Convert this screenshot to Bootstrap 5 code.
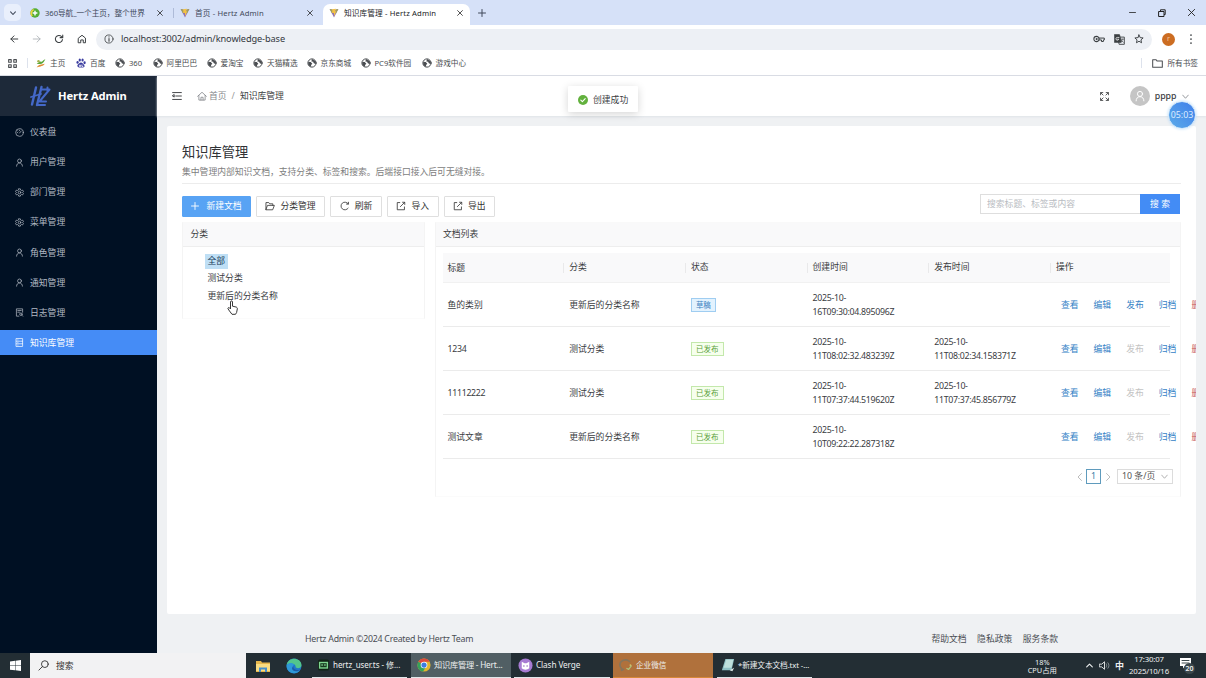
<!DOCTYPE html>
<html lang="zh-CN">
<head>
<meta charset="utf-8">
<title>知识库管理 - Hertz Admin</title>
<link rel="stylesheet" href="https://cdn.jsdelivr.net/npm/bootstrap@5.3.0/dist/css/bootstrap.min.css">
<style>
html,body{height:100%;overflow:hidden}
body{font-family:"Noto Sans","Noto Sans CJK SC",sans-serif;font-size:8.8px;line-height:14px;color:#3a3c3f;background:#fff}
svg{display:block;flex:none;fill:none;stroke:currentColor;stroke-width:1.3;stroke-linecap:round;stroke-linejoin:round}
svg[stroke="none"]{stroke:none}
.ic{width:10px;height:10px}
.txt{white-space:nowrap}
.desk{width:1206px;height:678px}
/* browser chrome */
.strip{height:25px;background:#d6e1f8;padding-left:4px;font-size:7.65px;color:#41495a}
.drop{width:17px;height:17px;border-radius:5px;background:#e9effc;margin:4px 3px 4px 0}
.tab{height:21px;margin-top:4px;padding:0 6px}
.tab .txt{margin-left:5px;letter-spacing:.14px}
.tab .txt.tight{letter-spacing:-.05px}
.tab.on{background:#fff;border-radius:7px 7px 0 0;color:#202124}
.tab .close{width:6px;height:6px;margin-left:auto;color:#222}
.sep{width:1px;height:10px;background:#aebbd8}
.tools{height:26px;padding:2px 8px 0;color:#3c4043}
.addr{height:21px;background:#edf0f5;border-radius:11px;width:1056px;margin-left:9px;padding:0 8px 0 8px}
.url{font-size:9.2px;margin-left:7px;letter-spacing:-.09px;color:#33373d}
.marks{height:25px;border-bottom:1px solid #d9dce3;font-size:7.65px;color:#4a4d51;padding:0 8px}
.mark-grid{display:grid;grid-template-columns:40px 39px 37.5px 54px 46.5px 53.5px 54px 61px 60px;margin-left:8px}
.mark-grid>div{display:flex;align-items:center;gap:4px;white-space:nowrap}
/* application */
.app{height:577px}
.side{width:157px;background:#001023;color:#b3bac4}
.brand{height:40px;background:#1d2939;color:#fff;font-weight:700;font-size:11.2px;letter-spacing:-.1px;padding-left:30px}
.menu{padding-top:3.5px;display:grid;gap:5.15px}
.menu>div{height:25px;padding-left:15px;display:flex;align-items:center;gap:6px}
.menu .ic{width:9px;height:9px}
.menu .cur{background:#458cf6;color:#fff}
.main{background:#eff1f3;min-width:0}
.top{height:40px;background:#fff;padding-left:15px;box-shadow:0 1px 2px #dfe3e8}
.avatar{width:20px;height:20px;border-radius:50%;background:#c5c5c5;color:#fff}
.page{width:1029px;height:488px;margin:10px 0 0 10px;background:#fff;padding:17px 0 0 15px;overflow:hidden;border-radius:2px}
.ttl{font-size:13.25px;line-height:19px;color:#303236}
.sub{color:#7d7d7d;height:22px;padding-top:2.5px;width:999px;border-bottom:1px solid #ececec}
.bar{width:998px;height:37.5px;padding-top:12px}
.b{height:20.5px;border:1px solid #dfdfdf;background:#fff;border-radius:1px;display:flex;align-items:center;justify-content:center;gap:5px;margin-right:5px;color:#333}
.b.pri{background:#58a3f4;border-color:#58a3f4;color:#fff;gap:7px}
.find{width:160px;height:20px;border:1px solid #dedede;border-right:0;padding-left:6px;color:#b9bcc2;line-height:18px}
.go{width:40px;height:20px;background:#438cf5;color:#fff;line-height:20px;text-align:center}
.pane{border:1px solid #f4f4f4;border-top-color:#f9f9f9;border-bottom-color:#fbfbfb}
.pane-h{height:24px;line-height:22.5px;background:#f9f9fa;border-bottom:1px solid #eee;padding-left:7.5px}
.tree{padding:6px 0 0 22px;height:71px}
.tree div{height:17.6px;line-height:17.6px}
.tree span{padding:1px 2.5px;display:inline-block;line-height:13.5px}
.tree .sel{background:#bfdff5;color:#193c58}
.gridt{width:727px;margin:6px 0 0 7px}
.r{display:grid;grid-template-columns:repeat(5,121.7px) 118px;height:44px;border-bottom:1px solid #ebebeb;align-items:center;padding:1px 0 0 4.5px}
.r.hd{background:#f9f9fa;height:30px;border-color:#f1f1f1}
.hd>div+div{border-left:1px solid #e9e9ea;margin-left:-6px;padding-left:5px;height:10px;line-height:9px}
.dt{letter-spacing:-.31px}
.tg{border:1px solid #c3e8ab;background:#f6ffed;color:#5aa03a;font-size:7.5px;line-height:12px;padding:0 4.2px;display:inline-block}
.tg.dr{border-color:#9fcdf1;background:#e2f2fe;color:#3c80c0;padding:0 4px}
.ops{display:flex;gap:15px;padding-left:5px;white-space:nowrap;color:#3582c6}
.ops .off{color:#c3c3c3}.ops .del{color:#c8555b}
.pg{height:36px;padding-right:7px;gap:4.5px;color:#555}
.pn{width:15px;height:15px;border:1px solid #5f9bbd;color:#397da5;line-height:13px;text-align:center}
.ps{width:56px;height:15px;border:1px solid #dcdcdc;line-height:13px;padding-left:4px}
.foot{height:39px;padding:18px 148px 0 148px;color:#4a4e53}
.toastbox{left:568px;top:86px;width:70px;height:26px;background:#fff;box-shadow:0 2px 9px rgba(0,0,0,.17);border-radius:1px;padding:1px 0 0 10px;gap:5px}
.ball{left:1168px;top:101px;width:28px;height:28px;border-radius:50%;background:linear-gradient(45deg,#5cabe9,#3f7fea);border:1px solid #cfe7fb;box-shadow:0 0 3px #bbdcf7;color:#dcecff;line-height:27px;text-align:center;font-size:8.8px}
.hand{left:227px;top:300px}
/* desktop taskbar */
.task{height:25px;background:#232e34;color:#eef0f0;font-size:8.2px}
.tsearch{width:216px;background:#f2f2f3;color:#333;padding-left:8px;gap:7px}
.t{height:25px;display:flex;align-items:center;gap:3px;padding-left:6px;border-bottom:1.5px solid #dfe7ea;white-space:nowrap}
.cpu{font-size:7.4px;line-height:8px;text-align:center}
.clock{font-size:7.8px;line-height:11.5px;text-align:center;letter-spacing:-.15px}
</style>
</head>
<body>
<svg width="0" height="0" class="position-absolute">
<defs>
<symbol id="x" viewBox="0 0 10 10"><path d="M1 1l8 8M9 1l-8 8"/></symbol>
<symbol id="vite" viewBox="0 0 16 16"><path d="M1 1.500l7 13.500 7-13.500-7 1.500z" fill="#8f70b4" stroke="none"/><path d="M5 2l6-1-1 4h2l-4 8V8H5z" fill="#f3c244" stroke="none"/><path d="M1 1.500l4 .7V9zM15 1.500l-4 .7V9z" fill="#a4a356" stroke="none"/></symbol>
<symbol id="globe" viewBox="0 0 16 16"><circle cx="8" cy="8" r="6.600" stroke-width="1.600"/><path d="M2 6l4 .5 2.500 2.500-2 2v3.500L2 11zM8 1.500l6 3.500v5l-3.500-2-.5-2-3-.5z" fill="currentColor" stroke="none"/></symbol>
<symbol id="user" viewBox="0 0 16 16"><circle cx="8" cy="5.200" r="3.400"/><path d="M2.800 14.500c0-3.200 2-5.600 5.200-5.600s5.200 2.400 5.200 5.600"/></symbol>
<symbol id="gear" viewBox="0 0 16 16"><path d="M6.500 1.500h3l.5 2 1.600.9 2-.6 1.400 2.500L13.500 8l1.500 1.700-1.400 2.500-2-.6-1.600.9-.5 2h-3l-.5-2-1.600-.9-2 .6L1 9.700 2.500 8 1 6.300l1.400-2.500 2 .6L6 3.500z"/><circle cx="8" cy="8" r="2.300"/></symbol>
<symbol id="home" viewBox="0 0 16 16"><path d="M1 8.500L8 2l7 6.500M3 7v7.500h10V7M6.300 14.500V10h3.400v4.500"/></symbol>
<symbol id="out" viewBox="0 0 16 16"><path d="M6 2.500H2v11.500h11.500V9.500M13.500 2.500L7 9M10.500 2H14v3.500"/></symbol>
<symbol id="down" viewBox="0 0 10 10"><path d="M1 3l4 4.500L9 3"/></symbol>
</defs>
</svg>
<div class="desk position-relative d-flex flex-column overflow-hidden">
<header>
  <div class="strip d-flex align-items-start">
    <div class="drop d-flex align-items-center justify-content-center"><svg width="6" height="6" style="stroke-width:1.8"><use href="#down"/></svg></div>
    <div class="tab d-flex align-items-center pb-1" style="width:149px"><svg class="ic" viewBox="0 0 16 16"><circle cx="8" cy="8" r="7.500" fill="#55ae35" stroke="none"/><path d="M3 12a7 7 0 0 1 2-9" stroke="#f0d43b" stroke-width="2.500"/><path d="M8 5v6M5 8h6" stroke="#fff" stroke-width="2.300"/></svg><span class="txt tight">360导航_一个主页，整个世界</span><svg class="close me-1"><use href="#x"/></svg></div>
    <div class="sep mt-2"></div>
    <div class="tab d-flex align-items-center pb-1" style="width:149px"><svg class="ic"><use href="#vite"/></svg><span class="txt">首页 - Hertz Admin</span><svg class="close me-1"><use href="#x"/></svg></div>
    <div class="tab on d-flex align-items-center pb-1" style="width:147px;padding-right:7px"><svg class="ic"><use href="#vite"/></svg><span class="txt">知识库管理 - Hertz Admin</span><svg class="close"><use href="#x"/></svg></div>
    <svg width="8" height="8" viewBox="0 0 8 8" style="margin:8.500px 0 0 8px"><path d="M4 .5v7M.5 4h7" stroke-width="1"/></svg>
    <div class="ms-auto d-flex align-items-center" style="gap:22px;height:25px;padding-right:11px;color:#222">
      <svg width="7" height="7" viewBox="0 0 7 7"><path d="M.5 3.500h6" stroke-width=".8"/></svg>
      <svg width="8" height="8" viewBox="0 0 8 8"><path d="M1 2.500h5v5H1zM2.500 2V.8h4.700v4.700H6.500" stroke-width="1"/></svg>
      <svg width="7" height="7" viewBox="0 0 10 10"><path d="M.5.5l9 9M9.500.5l-9 9"/></svg>
    </div>
  </div>
  <div class="tools d-flex align-items-center">
    <svg class="ic" viewBox="0 0 16 16" style="margin-right:13px;margin-left:1px"><path d="M14 8H3M8 3L3 8l5 5" stroke-width="1.600"/></svg>
    <svg class="ic" viewBox="0 0 16 16" style="margin-right:12px;color:#a8acb2"><path d="M2 8h11M8 3l5 5-5 5"/></svg>
    <svg class="ic" viewBox="0 0 16 16" style="margin-right:13px"><path d="M13.500 9A5.700 5.700 0 1 1 12 4l1.500 1.500M14 1.500v4.300H9.800" stroke-width="1.700"/></svg>
    <svg class="ic" viewBox="0 0 16 16"><path d="M2.500 6.500L8 2l5.500 4.500V14H10V9.500H6V14H2.500z" stroke-width="1.600"/></svg>
    <div class="addr d-flex align-items-center">
      <svg class="ic" viewBox="0 0 16 16"><circle cx="8" cy="8" r="6.500"/><path d="M8 7.200V11.500M8 4.500v.3" stroke-width="1.700"/></svg>
      <span class="url txt">localhost:3002/admin/knowledge-base</span>
      <div class="ms-auto d-flex align-items-center" style="gap:9px">
        <svg width="12" height="10" viewBox="0 0 19 16"><circle cx="5.500" cy="8" r="4.200" stroke-width="1.700"/><circle cx="5.500" cy="8" r="1" fill="currentColor"/><path d="M9.500 6.500H18v3h-1.500V12h-3V9.500h-4" stroke-width="1.600"/></svg>
        <svg width="11" height="11" viewBox="0 0 16 16"><path d="M6 4.500h9V15H8z"/><path d="M1 1h7l2.500 11H1z" fill="currentColor"/><path d="M7.200 5H5a2 2 0 1 0 1.800 2.500H5.500" stroke="#fff" stroke-width="1.100"/><path d="M10 7.500h4M12 7.500c0 2-1 3-2 4M11 9.500l2.500 2.500" stroke-width="1"/></svg>
        <svg class="ic" viewBox="0 0 16 16"><path d="M8 1.500l1.900 4.300 4.700.5-3.500 3.100 1 4.600L8 11.600 3.900 14l1-4.600L1.400 6.300l4.700-.5z" stroke-width="1.500"/></svg>
      </div>
    </div>
    <div class="rounded-circle text-center" style="width:13px;height:13px;background:#cc6d22;color:#f7c89c;font-size:7px;line-height:12px;margin-left:10px">r</div>
    <svg width="4" height="10" viewBox="0 0 4 10" style="margin-left:14px"><path d="M2 1v.1M2 5v.1M2 9v.1" stroke-width="1.700"/></svg>
  </div>
  <div class="marks d-flex align-items-center">
    <svg width="9" height="9" viewBox="0 0 14 14"><path d="M1 1h4v4H1zM9 1h4v4H9zM1 9h4v4H1zM9 9h4v4H9z" stroke-width="1.700"/></svg>
    <div class="sep" style="margin-left:10px;background:#dde2ec"></div>
    <div class="mark-grid">
      <div><svg class="ic" viewBox="0 0 16 16" stroke="none"><path d="M1 9c4-1 5-4 7-3s4-4 7-4c-2 3-3 6-6 7s-6 1-8 0z" fill="#5ca83c"/><path d="M1 15c3-5 8-5 13-6-2 4-7 4-13 6z" fill="#df8b32"/><circle cx="4" cy="5" r="2" fill="#a4b34d"/></svg>主页</div>
      <div><svg class="ic" viewBox="0 0 16 16" stroke="none" style="fill:#3a3c9f"><ellipse cx="2.500" cy="7" rx="1.800" ry="2.300"/><ellipse cx="6" cy="3.200" rx="1.800" ry="2.400"/><ellipse cx="10.500" cy="3.200" rx="1.800" ry="2.400"/><ellipse cx="13.700" cy="7.500" rx="1.800" ry="2.300"/><path d="M8 7c2 0 3 2 5 4s0 4-2 4H5c-3 0-3.500-3-2-4.500S6 7 8 7z"/><path d="M6 11.500h1.500v2H6zM9.500 11v2.500H11" style="stroke:#fff;fill:none"/></svg>百度</div>
      <div><svg class="ic"><use href="#globe"/></svg>360</div>
      <div><svg class="ic"><use href="#globe"/></svg>阿里巴巴</div>
      <div><svg class="ic"><use href="#globe"/></svg>爱淘宝</div>
      <div><svg class="ic"><use href="#globe"/></svg>天猫精选</div>
      <div><svg class="ic"><use href="#globe"/></svg>京东商城</div>
      <div><svg class="ic"><use href="#globe"/></svg><span>PC9软件园</span></div>
      <div><svg class="ic"><use href="#globe"/></svg>游戏中心</div>
    </div>
    <div class="ms-auto d-flex align-items-center"><div class="sep" style="margin-right:10px;background:#dde2ec"></div><svg width="11" height="9" viewBox="0 0 16 13"><path d="M1 1h5l1.500 2H15v9H1z" stroke-width="1.500"/></svg><span class="txt" style="margin-left:4px">所有书签</span></div>
  </div>
</header>
<div class="app d-flex">
  <aside class="side flex-shrink-0">
    <div class="brand d-flex align-items-center">
      <svg width="21" height="22" viewBox="0 0 21 22" style="color:#4468c8;margin-right:7px"><path d="M6 2.500L2 19.500M11.500 2L7 20" stroke-width="2.400"/><path d="M1 12l10-3" stroke-width="1.800"/><path d="M12 4.500h7.500L9.500 16.500H16M17.500 2.500v3M7 20h8" stroke-width="2"/></svg>
      <span class="txt">Hertz Admin</span>
    </div>
    <nav class="menu">
      <div><svg class="ic" viewBox="0 0 16 16"><circle cx="8" cy="8" r="6.800"/><path d="M8 9l3-3.500M4 8h.5M8 4v.5M5 5l.3.3"/></svg>仪表盘</div>
      <div><svg class="ic"><use href="#user"/></svg>用户管理</div>
      <div><svg class="ic"><use href="#gear"/></svg>部门管理</div>
      <div><svg class="ic"><use href="#gear"/></svg>菜单管理</div>
      <div><svg class="ic"><use href="#user"/></svg>角色管理</div>
      <div><svg class="ic"><use href="#user"/></svg>通知管理</div>
      <div><svg class="ic" viewBox="0 0 16 16"><path d="M7 14.500H2.500v-13h11v6M5 4.500h6M5 7.500h3"/><circle cx="10.500" cy="11" r="2.200"/><path d="M12 12.800l1.800 1.800"/></svg>日志管理</div>
      <div class="cur"><svg class="ic" viewBox="0 0 16 16"><path d="M2.500 1h11v14h-11zM2.500 5.700h11M2.500 10.300h11M5 3.400h.3M5 8h.3M5 12.600h.3"/></svg>知识库管理</div>
    </nav>
  </aside>
  <main class="main flex-grow-1">
    <div class="top d-flex align-items-center">
      <svg class="ic" viewBox="0 0 16 16"><path d="M1 2.500h14M6 8h9M1 13.500h14M3.500 6.300v3.400L1 8z" stroke-width="1.500"/></svg>
      <svg class="ic" style="margin:0 2px 0 15px;color:#85888c"><use href="#home"/></svg>
      <span style="color:#85888c">首页</span><span style="color:#999;margin:0 5px">/</span><span>知识库管理</span>
      <div class="ms-auto d-flex align-items-center" style="margin-right:17.500px">
        <svg width="9" height="9" viewBox="0 0 16 16" style="margin-right:20.500px"><path d="M1.500 1.500l4 4M1 5V1h4M14.500 1.500l-4 4M11 1h4v4M1.500 14.500l4-4M1 11v4h4M14.500 14.500l-4-4M15 11v4h-4" stroke-width="1.500"/></svg>
        <div class="avatar d-flex align-items-center justify-content-center"><svg width="12" height="12"><use href="#user"/></svg></div>
        <span style="margin:0 5px;font-size:8.800px;font-weight:500">pppp</span>
        <svg width="7" height="7" style="color:#8e9297"><use href="#down"/></svg>
      </div>
    </div>
    <section class="page">
      <div class="ttl">知识库管理</div>
      <div class="sub">集中管理内部知识文档，支持分类、标签和搜索。后端接口接入后可无缝对接。</div>
      <div class="bar d-flex align-items-start">
        <div class="b pri" style="width:69px"><svg width="8" height="8" viewBox="0 0 8 8"><path d="M4 .5v7M.5 4h7" stroke-width=".9"/></svg>新建文档</div>
        <div class="b" style="width:69px"><svg class="ic" viewBox="0 0 16 16"><path d="M1.500 13.500v-11h4.500l1.500 2h5v2.500M1.500 13.500L4 7h11l-2.500 6.500z"/></svg>分类管理</div>
        <div class="b" style="width:52px"><svg class="ic" viewBox="0 0 16 16"><path d="M13 11.500A6.200 6.200 0 1 1 13 4.500M13.500 2v3h-3"/></svg>刷新</div>
        <div class="b" style="width:51.500px"><svg class="ic"><use href="#out"/></svg>导入</div>
        <div class="b" style="width:51.500px"><svg class="ic"><use href="#out"/></svg>导出</div>
        <div class="ms-auto d-flex" style="margin-top:-2px"><div class="find">搜索标题、标签或内容</div><div class="go">搜 索</div></div>
      </div>
      <div class="d-flex align-items-start">
        <div class="pane" style="width:243px;margin-right:10px">
          <div class="pane-h">分类</div>
          <div class="tree"><div><span class="sel">全部</span></div><div><span>测试分类</span></div><div><span>更新后的分类名称</span></div></div>
        </div>
        <div class="pane" style="width:746px;height:275px">
          <div class="pane-h" style="padding-left:7px">文档列表</div>
          <div class="gridt">
            <div class="r hd"><div>标题</div><div>分类</div><div>状态</div><div>创建时间</div><div>发布时间</div><div>操作</div></div>
            <div class="r"><div>鱼的类别</div><div>更新后的分类名称</div><div><span class="tg dr">草稿</span></div><div class="dt">2025-10-<br>16T09:30:04.895096Z</div><div></div><div class="ops"><span>查看</span><span>编辑</span><span>发布</span><span>归档</span><span class="del">删除</span></div></div>
            <div class="r"><div class="dt">1234</div><div>测试分类</div><div><span class="tg">已发布</span></div><div class="dt">2025-10-<br>11T08:02:32.483239Z</div><div class="dt">2025-10-<br>11T08:02:34.158371Z</div><div class="ops"><span>查看</span><span>编辑</span><span class="off">发布</span><span>归档</span><span class="del">删除</span></div></div>
            <div class="r"><div class="dt">11112222</div><div>测试分类</div><div><span class="tg">已发布</span></div><div class="dt">2025-10-<br>11T07:37:44.519620Z</div><div class="dt">2025-10-<br>11T07:37:45.856779Z</div><div class="ops"><span>查看</span><span>编辑</span><span class="off">发布</span><span>归档</span><span class="del">删除</span></div></div>
            <div class="r"><div>测试文章</div><div>更新后的分类名称</div><div><span class="tg">已发布</span></div><div class="dt">2025-10-<br>10T09:22:22.287318Z</div><div></div><div class="ops"><span>查看</span><span>编辑</span><span class="off">发布</span><span>归档</span><span class="del">删除</span></div></div>
          </div>
          <div class="pg d-flex align-items-center justify-content-end">
            <svg width="5" height="8" viewBox="0 0 5 8" style="color:#b5b5b5"><path d="M4.500.5L1 4l3.500 3.500" stroke-width=".9"/></svg>
            <div class="pn">1</div>
            <svg width="5" height="8" viewBox="0 0 5 8" style="color:#b5b5b5"><path d="M.5.5L4 4 .5 7.500" stroke-width=".9"/></svg>
            <div class="ps d-flex align-items-center justify-content-between pe-1" style="margin-left:2px"><span class="txt">10 条/页</span><svg width="7" height="7" style="color:#aaa"><use href="#down"/></svg></div>
          </div>
        </div>
      </div>
    </section>
    <div class="foot d-flex align-items-start justify-content-between"><span class="txt" style="letter-spacing:-.24px">Hertz Admin ©2024 Created by Hertz Team</span><div class="d-flex" style="gap:10.500px"><span>帮助文档</span><span>隐私政策</span><span>服务条款</span></div></div>
  </main>
</div>
<footer class="task d-flex">
  <div class="d-flex align-items-center justify-content-center" style="width:30px"><svg width="11" height="11" viewBox="0 0 12 12" stroke="none" style="fill:#fff"><path d="M0 1.500l5.500-.7v5H0zM6 .7L12 0v5.800H6zM0 6.300h5.500v5L0 10.600zM6 6.300h6V12l-6-.7z"/></svg></div>
  <div class="tsearch d-flex align-items-center"><svg width="11" height="11" viewBox="0 0 12 12" style="stroke-width:1"><circle cx="7.500" cy="4.500" r="3.700"/><path d="M4.800 7.200L1 11"/></svg><span style="font-size:8.800px">搜索</span></div>
  <div class="d-flex align-items-center" style="width:66px;padding-left:10px;gap:16px">
    <svg width="14" height="12" viewBox="0 0 14 12" stroke="none"><path d="M0 1h5l1 1.500h8V12H0z" fill="#e6b64b"/><path d="M0 4h14v7H0z" fill="#f8dc82"/><path d="M3 7.500h8V12H9V9.500H5V12H3z" fill="#468fcc"/></svg>
    <svg width="16" height="16" viewBox="0 0 16 16" stroke="none"><circle cx="8" cy="8" r="7.500" fill="#2077ca"/><path d="M.6 7C2-1.500 15-1 15.500 7c.2 3.500-5 4-6 2 1-3-5-5-8.900-2z" fill="#52c58d"/><path d="M.6 7C4 4 7.500 5 8 7 5.500 8 6 13 10 13c2 0 3-1 4-1C10 18 0 15 .6 7z" fill="#2e98d8"/><path d="M7.500 8c-1 3 3 5 7 3.500-3 3-8.500 2-8.500-1.500z" fill="#1d5ba8"/></svg>
  </div>
  <div class="t" style="width:95px;margin-right:4px"><svg width="11" height="12" viewBox="0 0 12 12" stroke="none"><rect width="12" height="12" rx="2" fill="#112416"/><rect x="1" y="2.500" width="10" height="7.500" fill="#7ed68f"/><path d="M2.500 4h7v4.500h-7z" fill="#173b20"/><path d="M3.500 5.500h2v1h-2zM6.500 5.500h2v1h-2z" fill="#9ceca8"/></svg><span style="font-size:8px;letter-spacing:-.05px;margin-left:1px">hertz_user.ts - 修...</span></div>
  <div class="t" style="width:100px;margin-right:3px;background:#515f64"><svg width="14" height="14" viewBox="0 0 16 16" stroke="none"><circle cx="8" cy="8" r="7.500" fill="#e1b62e"/><path d="M8 8L1.500 4.200A7.500 7.500 0 0 1 14.500 4.200H8z" fill="#dc4b3e"/><path d="M8 8L1.500 4.200A7.500 7.500 0 0 0 7 15.500l3.500-6z" fill="#35a25b"/><circle cx="8" cy="8" r="3.800" fill="#fff"/><circle cx="8" cy="8" r="3" fill="#3a7de0"/></svg><span style="letter-spacing:-.2px">知识库管理 - Hert...</span></div>
  <div class="t" style="width:96px;margin-right:3px;padding-left:4px"><svg width="15" height="15" viewBox="0 0 16 16" stroke="none"><circle cx="8" cy="8" r="7.500" fill="#a77bd2"/><path d="M4 4l3 1.500h2L12 4v7c-2 2-6 2-8 0z" fill="#fff"/><path d="M5.500 8h1.500v1H5.500zM9 8h1.500v1H9z" fill="#7c4fae"/></svg><span style="letter-spacing:-.1px">Clash Verge</span></div>
  <div class="t" style="width:100px;margin-right:4px;background:#b0713c;border-color:#d98838"><svg width="14" height="14" viewBox="0 0 16 16"><path d="M12 4C8 0 1 3 1 8c0 2 1 3 2 4v2l2-1" stroke="#85745b" stroke-width="2"/><path d="M9 12l2 1 3-4" stroke="#acc17b" stroke-width="1.500"/><circle cx="13" cy="8" r="1" fill="#d5c26a" stroke="none"/></svg><span style="font-size:7.600px">企业微信</span></div>
  <div class="t" style="width:95px;padding-left:4px"><svg width="14" height="14" viewBox="0 0 16 16" stroke="none"><path d="M5 1h10l-3 13H1z" fill="#8fc1c5"/><path d="M6 2h8l-2 9H3z" fill="#bee0dc"/><path d="M10 14l5-3-2 4z" fill="#e3eeec"/></svg><span style="font-size:7.700px;letter-spacing:-.1px">*新建文本文档.txt -...</span></div>
  <div class="ms-auto d-flex align-items-center">
    <div class="cpu" style="margin-right:29px"><div>18%</div><div>CPU占用</div></div>
    <svg width="7" height="7" viewBox="0 0 10 10"><path d="M1 7l4-4 4 4" stroke-width="1.600"/></svg>
    <svg width="11" height="11" viewBox="0 0 16 16" style="margin-left:6px"><path d="M1 6h3l4-3.500v11L4 10H1z"/><path d="M10.500 5.500c1 1.500 1 3.500 0 5M13 4c2 2.500 2 5.500 0 8" stroke="#909a9e"/></svg>
    <span style="font-size:9px;margin-left:5px;font-weight:700">中</span>
    <div class="clock" style="margin:0 11px 0 5px">17:30:07<br>2025/10/16</div>
    <div class="position-relative" style="width:26px;height:16px"><svg width="11" height="11" viewBox="0 0 11 11" stroke="none" style="fill:#fff"><path d="M0 0h11v8H5l-2 2.500V8H0z"/><path d="M2 2.500h7M2 5h7" stroke="#29353b" stroke-width=".9"/></svg><span class="position-absolute rounded-circle text-center" style="left:4px;top:5px;width:11px;height:11px;line-height:11px;background:#3c474c;font-size:7px;font-weight:600">20</span></div>
  </div>
</footer>
<div class="toastbox position-absolute d-flex align-items-center"><svg class="ic" viewBox="0 0 16 16"><circle cx="8" cy="8" r="8" fill="#62b13d" stroke="none"/><path d="M4.500 8.200l2.500 2.500 4.500-5" stroke="#fff" stroke-width="1.700"/></svg><span class="txt">创建成功</span></div>
<div class="ball position-absolute">05:03</div>
<svg class="hand position-absolute" width="11" height="15" viewBox="0 0 11 15"><path d="M3.500 8.500V2c0-1.500 2-1.500 2 0v4.200l3.500.8c1 .3 1.500 1 1.300 2L9.600 12.500 8.500 14.300H5L2.500 11 1 8.800c-.5-1 .8-1.700 1.500-1z" fill="#fff" stroke="#222" stroke-width=".9"/></svg>
</div>
<script src="https://cdn.jsdelivr.net/npm/bootstrap@5.3.0/dist/js/bootstrap.bundle.min.js"></script>
</body>
</html>
